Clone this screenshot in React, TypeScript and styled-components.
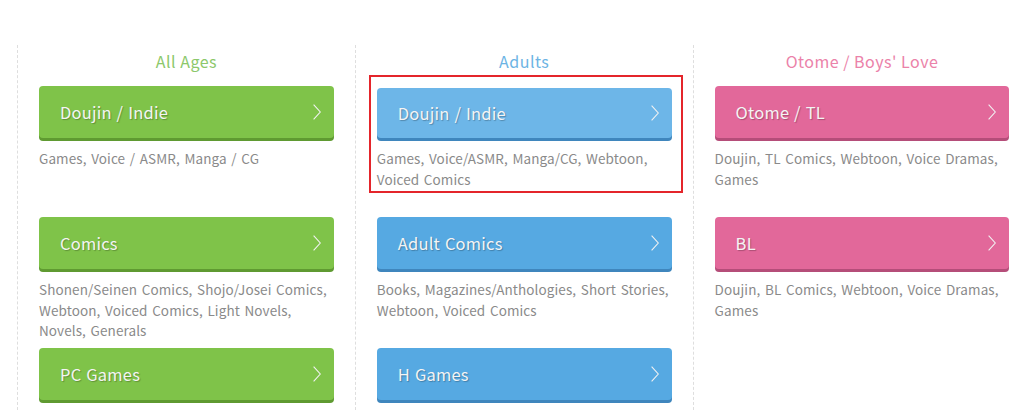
import styled, { createGlobalStyle } from "styled-components";

const GlobalStyle = createGlobalStyle`
  html, body {
    margin: 0;
    padding: 0;
    background: #fff;
    overflow: hidden;
  }
  body {
    font-family: "Noto Sans CJK JP", "Noto Sans", sans-serif;
  }
`;

type Tone = "green" | "blue" | "pink";

const tones: Record<Tone, { title: string; bg: string; light: string; edge: string }> = {
  green: { title: "#8cc86b", bg: "#7fc349", light: "#7fc349", edge: "#5f9a31" },
  blue: { title: "#6cb4e4", bg: "#56a9e2", light: "#6db6e8", edge: "#3f86bd" },
  pink: { title: "#eb82a9", bg: "#e2689a", light: "#e2689a", edge: "#b54d79" },
};

const Grid = styled.div`
  display: grid;
  grid-template-columns: repeat(3, 337.8px);
  width: 1014px;
  margin: 45px 0 0 17px;
`;

const Column = styled.section`
  border-left: 1px dashed #dedede;
  padding: 5px 21px 0 21px;
  height: 360px;
`;

const Title = styled.h2<{ $tone: Tone }>`
  margin: 0 0 14px;
  font-size: 16px;
  line-height: 22px;
  font-weight: 400;
  text-align: center;
  letter-spacing: 0.5px;
  color: ${({ $tone }) => tones[$tone].title};
`;

const Item = styled.div<{ $marked?: boolean }>`
  position: relative;
  min-height: 131px;
  padding-top: ${({ $marked }) => ($marked ? "2px" : "0")};
  box-sizing: border-box;

  ${({ $marked }) =>
    $marked &&
    `
    &::after {
      content: "";
      position: absolute;
      left: -8px;
      top: -11px;
      width: 314px;
      height: 118px;
      border: 2px solid #e4252b;
      box-sizing: border-box;
      pointer-events: none;
    }
  `}
`;

const Button = styled.a<{ $tone: Tone; $marked?: boolean }>`
  display: flex;
  align-items: center;
  justify-content: space-between;
  height: ${({ $marked }) => ($marked ? "50px" : "52px")};
  padding: 0 13px 0 21px;
  border-radius: 4px;
  background: ${({ $tone, $marked }) => ($marked ? tones[$tone].light : tones[$tone].bg)};
  box-shadow: 0 3px 0 ${({ $tone }) => tones[$tone].edge};
  color: #f4f4f4;
  font-size: 16.5px;
  letter-spacing: 0.2px;
  word-spacing: 1px;
  text-decoration: none;
  text-shadow: 1px 1px 1px rgba(0, 0, 0, 0.25);
  cursor: pointer;
`;

const Chevron = styled.svg`
  width: 8px;
  height: 16px;
  flex: none;
`;

const Desc = styled.p`
  margin: 10px 0 0;
  font-size: 13.5px;
  line-height: 20.7px;
  color: #8a8a8a;
  letter-spacing: 0.1px;
  word-spacing: 1.5px;
`;

const columns: { title: string; tone: Tone; items: { label: string; desc: string; marked?: boolean }[] }[] = [
  {
    title: "All Ages",
    tone: "green",
    items: [
      { label: "Doujin / Indie", desc: "Games, Voice / ASMR, Manga / CG" },
      {
        label: "Comics",
        desc: "Shonen/Seinen Comics, Shojo/Josei Comics, Webtoon, Voiced Comics, Light Novels, Novels, Generals",
      },
      { label: "PC Games", desc: "" },
    ],
  },
  {
    title: "Adults",
    tone: "blue",
    items: [
      {
        label: "Doujin / Indie",
        desc: "Games, Voice/ASMR, Manga/CG, Webtoon, Voiced Comics",
        marked: true,
      },
      {
        label: "Adult Comics",
        desc: "Books, Magazines/Anthologies, Short Stories, Webtoon, Voiced Comics",
      },
      { label: "H Games", desc: "" },
    ],
  },
  {
    title: "Otome / Boys' Love",
    tone: "pink",
    items: [
      { label: "Otome / TL", desc: "Doujin, TL Comics, Webtoon, Voice Dramas, Games" },
      { label: "BL", desc: "Doujin, BL Comics, Webtoon, Voice Dramas, Games" },
    ],
  },
];

export default function App() {
  return (
    <>
      <GlobalStyle />
      <Grid>
        {columns.map((col) => (
          <Column key={col.title}>
            <Title $tone={col.tone}>{col.title}</Title>
            {col.items.map((item) => (
              <Item key={item.label} $marked={item.marked}>
                <Button $tone={col.tone} $marked={item.marked}>
                  <span>{item.label}</span>
                  <Chevron viewBox="0 0 8 16" fill="none">
                    <path d="M0.6 0.6l6.7 7.4-6.7 7.4" stroke="#f2f2f2" strokeWidth="1.1" />
                  </Chevron>
                </Button>
                {item.desc && <Desc>{item.desc}</Desc>}
              </Item>
            ))}
          </Column>
        ))}
      </Grid>
    </>
  );
}
